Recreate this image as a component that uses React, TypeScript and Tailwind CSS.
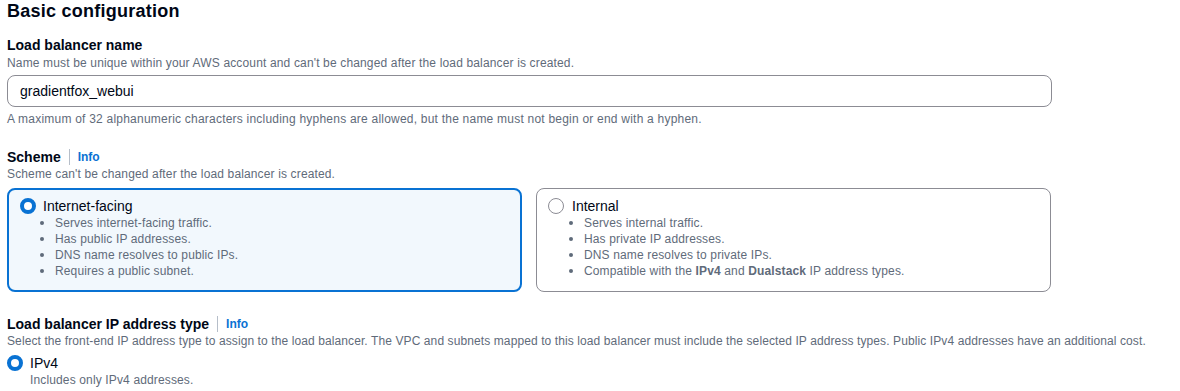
import React from "react";

const font = { fontFamily: '"Liberation Sans", Arial, sans-serif' };

function Info() {
  return (
    <>
      <span className="mx-[8px] inline-block h-[16px] w-px bg-[#b6bec9]" />
      <span className="text-[12px] font-bold leading-[18px] text-[#0972d3]">Info</span>
    </>
  );
}

function Radio({ checked }: { checked: boolean }) {
  return checked ? (
    <span className="box-border inline-block h-[16px] w-[16px] shrink-0 rounded-full border-[4.5px] border-[#0972d3] bg-white" />
  ) : (
    <span className="box-border inline-block h-[16px] w-[16px] shrink-0 rounded-full border-[1.5px] border-[#8c8c94] bg-white" />
  );
}

function Bullet({ children }: { children: React.ReactNode }) {
  return (
    <li className="flex h-[16px] items-center text-[12px] leading-[16px] tracking-[0.14px] text-[#5f6b7a]">
      <span className="ml-[-3px] mr-[11px] inline-block h-[4px] w-[4px] rounded-full bg-[#5f6b7a]" />
      <span>{children}</span>
    </li>
  );
}

export default function App() {
  return (
    <div className="bg-white pl-[7px] text-[#000716]" style={font}>
      <div className="w-[1045px]">
        <h2 className="text-[18px] font-bold leading-[22px] tracking-[0.25px]">Basic configuration</h2>

        <div className="mt-[14px] text-[14px] font-bold leading-[18px]">Load balancer name</div>
        <div className="mt-px text-[12px] leading-[16px] tracking-[0.15px] text-[#5f6b7a]">
          Name must be unique within your AWS account and can't be changed after the load balancer is created.
        </div>
        <div className="mt-[4px] flex h-[32px] items-center rounded-[8px] border border-[#8c8c94] pl-[12px] text-[14px]">
          gradientfox_webui
        </div>
        <div className="mt-[4px] text-[12px] leading-[16px] tracking-[0.22px] text-[#5f6b7a]">
          A maximum of 32 alphanumeric characters including hyphens are allowed, but the name must not begin or end with a hyphen.
        </div>

        <div className="mt-[21px] flex items-center text-[14px] font-bold leading-[18px]">
          <span>Scheme</span>
          <Info />
        </div>
        <div className="text-[12px] leading-[16px] tracking-[0.14px] text-[#5f6b7a]">
          Scheme can't be changed after the load balancer is created.
        </div>

        <div className="mt-[6px] grid grid-cols-[515px_515px] gap-[14px]">
          <div className="h-[104px] rounded-[8px] border-2 border-[#0972d3] bg-[#f2f8fd] pl-[11px] pt-[7px]">
            <div className="flex h-[18px] items-center">
              <Radio checked />
              <span className="ml-[7px] text-[14px] leading-[18px]">Internet-facing</span>
            </div>
            <ul className="pl-[23px]">
              <Bullet>Serves internet-facing traffic.</Bullet>
              <Bullet>Has public IP addresses.</Bullet>
              <Bullet>DNS name resolves to public IPs.</Bullet>
              <Bullet>Requires a public subnet.</Bullet>
            </ul>
          </div>
          <div className="h-[104px] rounded-[8px] border border-[#8c8c94] pl-[11px] pt-[8px]">
            <div className="flex h-[18px] items-center">
              <Radio checked={false} />
              <span className="ml-[8px] text-[14px] leading-[18px]">Internal</span>
            </div>
            <ul className="pl-[24px]">
              <Bullet>Serves internal traffic.</Bullet>
              <Bullet>Has private IP addresses.</Bullet>
              <Bullet>DNS name resolves to private IPs.</Bullet>
              <Bullet>
                Compatible with the <b>IPv4</b> and <b>Dualstack</b> IP address types.
              </Bullet>
            </ul>
          </div>
        </div>

        <div className="mt-[23px] flex items-center text-[14px] font-bold leading-[18px]">
          <span>Load balancer IP address type</span>
          <Info />
        </div>
        <div className="whitespace-nowrap text-[12px] leading-[16px] tracking-[0.1px] text-[#5f6b7a]">
          Select the front-end IP address type to assign to the load balancer. The VPC and subnets mapped to this load balancer must include the selected IP address types. Public IPv4 addresses have an additional cost.
        </div>
        <div className="mt-[5px] flex h-[18px] items-center">
          <Radio checked />
          <span className="ml-[7px] text-[14px] leading-[18px]">IPv4</span>
        </div>
        <div className="pl-[23px] text-[12px] leading-[16px] tracking-[0.14px] text-[#5f6b7a]">Includes only IPv4 addresses.</div>
      </div>
    </div>
  );
}
